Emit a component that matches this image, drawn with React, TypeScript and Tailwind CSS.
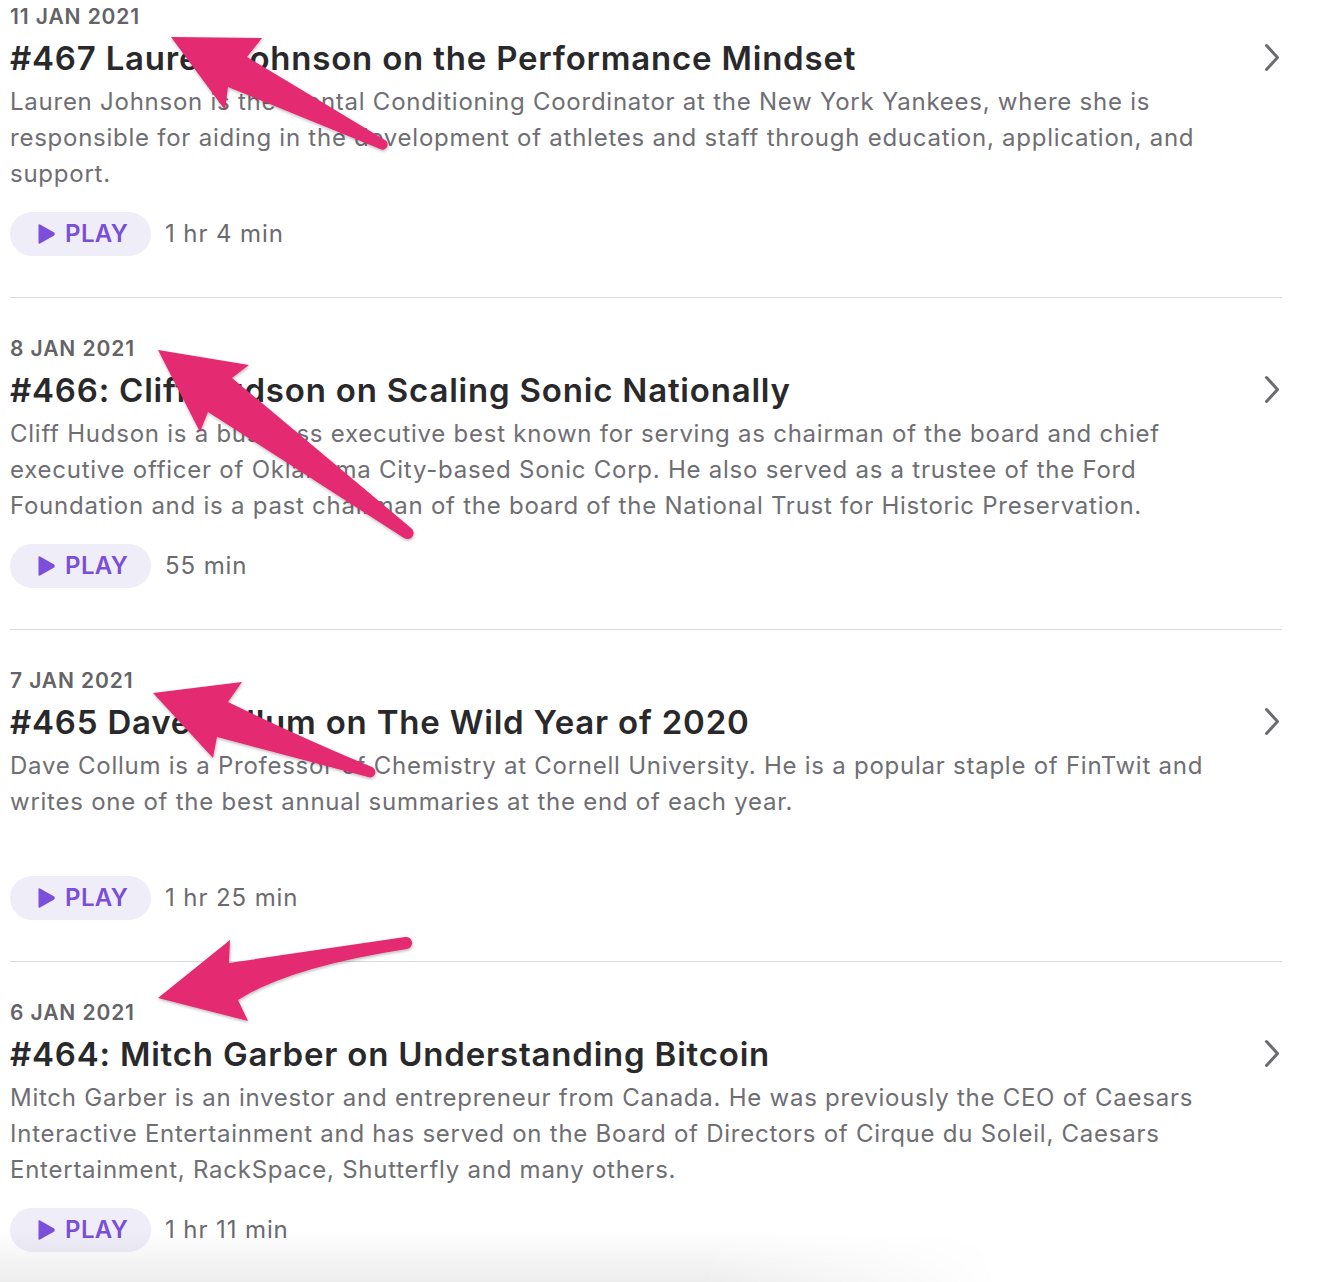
import React from "react";

type Episode = {
  date: string;
  title: string;
  description: string;
  duration: string;
};

const episodes: Episode[] = [
  {
    date: "11 JAN 2021",
    title: "#467 Lauren Johnson on the Performance Mindset",
    description:
      "Lauren Johnson is the Mental Conditioning Coordinator at the New York Yankees, where she is responsible for aiding in the development of athletes and staff through education, application, and support.",
    duration: "1 hr 4 min",
  },
  {
    date: "8 JAN 2021",
    title: "#466: Cliff Hudson on Scaling Sonic Nationally",
    description:
      "Cliff Hudson is a business executive best known for serving as chairman of the board and chief executive officer of Oklahoma City-based Sonic Corp. He also served as a trustee of the Ford Foundation and is a past chairman of the board of the National Trust for Historic Preservation.",
    duration: "55 min",
  },
  {
    date: "7 JAN 2021",
    title: "#465 Dave Collum on The Wild Year of 2020",
    description:
      "Dave Collum is a Professor of Chemistry at Cornell University. He is a popular staple of FinTwit and writes one of the best annual summaries at the end of each year.",
    duration: "1 hr 25 min",
  },
  {
    date: "6 JAN 2021",
    title: "#464: Mitch Garber on Understanding Bitcoin",
    description:
      "Mitch Garber is an investor and entrepreneur from Canada. He was previously the CEO of Caesars Interactive Entertainment and has served on the Board of Directors of Cirque du Soleil, Caesars Entertainment, RackSpace, Shutterfly and many others.",
    duration: "1 hr 11 min",
  },
];

// Callout arrows drawn over the list
const arrowPaths = [
  "M171,37 L262,38 L247,57 L385,140 A5,5 0 0 1 380,149 L228,87 L225,110 Z",
  "M158,350 L249,365 L232,378 L411,528 A5.5,5.5 0 0 1 404,538 L208,412 L200,432 Z",
  "M153,693 L242,682 L228,702 Q300,737 372,767 A5,5 0 0 1 368,777 L217,737 L213,758 Z",
  "M158,998 L230,940 L229,963 L405,937 A6,6 0 0 1 407,949 Q290,967 238,1000 L248,1021 Z",
];

function Chevron() {
  return (
    <svg width="16" height="30" viewBox="0 0 16 30" className="shrink-0">
      <path
        d="M2.5 2.5 L13.5 14.5 L2.5 26.5"
        fill="none"
        stroke="#6b6b70"
        strokeWidth="3"
        strokeLinecap="round"
        strokeLinejoin="round"
      />
    </svg>
  );
}

function PlayIcon() {
  return (
    <svg width="20" height="22" viewBox="0 0 20 22">
      <path
        d="M2.5 2.2 Q2.5 0.6 4 1.4 L18.2 9.6 Q19.6 11 18.2 12.4 L4 20.6 Q2.5 21.4 2.5 19.8 Z"
        fill="#7b4fd9"
      />
    </svg>
  );
}

function EpisodeRow({ ep, first, last }: { ep: Episode; first: boolean; last: boolean }) {
  return (
    <div
      className={`${first ? "pt-[5px]" : "pt-[39px]"} pb-[41px] ${
        last ? "" : "border-b border-[#d9d9dc]"
      }`}
    >
      <div className="text-[21px] leading-[24px] font-semibold text-[#636368] tracking-[0.9px]">
        {ep.date}
      </div>
      <div className="mt-[9px] h-[40px] flex items-center justify-between pr-[2px]">
        <div className="text-[33px] leading-[40px] font-semibold text-[#29292b] tracking-[0.8px] whitespace-nowrap">
          {ep.title}
        </div>
        <Chevron />
      </div>
      <p className="mt-[6px] h-[108px] max-w-[1225px] text-[24px] leading-[36px] text-[#6e6e73] tracking-[0.75px]">
        {ep.description}
      </p>
      <div className="mt-[20px] flex items-center gap-[14px]">
        <button className="h-[44px] w-[141px] rounded-full bg-[#efedf7] flex items-center pl-[26px] gap-[9px]">
          <PlayIcon />
          <span className="text-[24px] leading-none font-semibold text-[#7a4fd8] tracking-[0.4px]">
            PLAY
          </span>
        </button>
        <span className="text-[24px] leading-none text-[#6a6a6f] tracking-[0.9px]">{ep.duration}</span>
      </div>
    </div>
  );
}

export default function App() {
  return (
    <div
      className="relative w-[1328px] h-[1282px] overflow-hidden bg-white"
      style={{ fontFamily: 'Inter, "Noto Sans", "Liberation Sans", sans-serif' }}
    >
      <div className="w-[1282px] pl-[10px]">
        {episodes.map((ep, i) => (
          <EpisodeRow key={ep.date} ep={ep} first={i === 0} last={i === episodes.length - 1} />
        ))}
      </div>

      <div className="pointer-events-none absolute bottom-0 left-0 h-[52px] w-[1000px] bg-[linear-gradient(to_top,rgba(0,0,0,0.07),rgba(0,0,0,0))] [mask-image:linear-gradient(to_right,black_70%,transparent)]" />

      <svg
        className="pointer-events-none absolute left-0 top-0"
        width="1328"
        height="1282"
        viewBox="0 0 1328 1282"
      >
        <defs>
          <filter id="arrowShadow" x="-20%" y="-20%" width="140%" height="140%">
            <feDropShadow dx="0.5" dy="1.5" stdDeviation="1.5" floodColor="#000" floodOpacity="0.28" />
          </filter>
        </defs>
        {arrowPaths.map((d) => (
          <path key={d} d={d} fill="#e4296f" strokeLinejoin="round" filter="url(#arrowShadow)" />
        ))}
      </svg>
    </div>
  );
}
